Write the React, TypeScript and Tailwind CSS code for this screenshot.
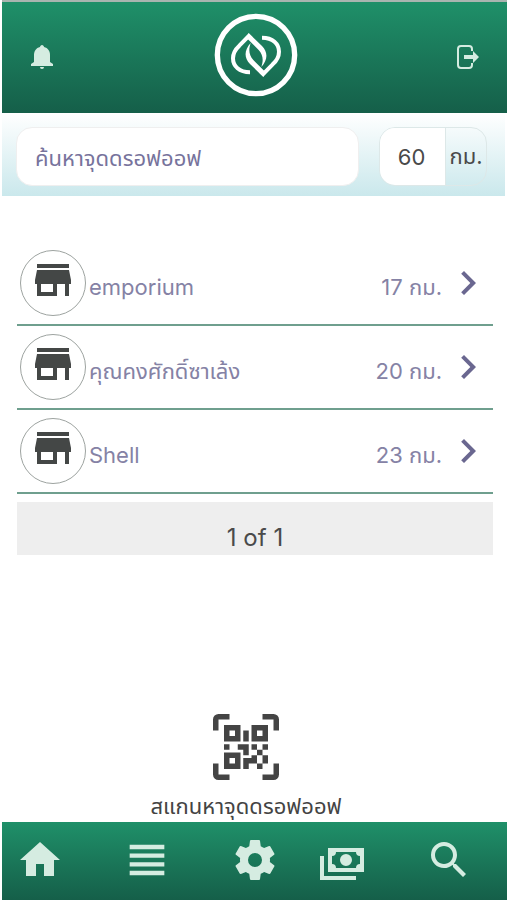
import type { ReactNode } from "react";

const dropOffs = [
	{ name: "emporium", distance: 17 },
	{ name: "คุณคงศักดิ์ซาเล้ง", distance: 20 },
	{ name: "Shell", distance: 23 },
];

const icons = {
	store: "M12,18H6V14H12M21,14V12L20,7H4L3,12V14H4V20H14V14H18V20H20V14M20,4H4V6H20V4Z",
	chevron: "M8.59,16.58L13.17,12L8.59,7.41L10,6L16,12L10,18L8.59,16.58Z",
	qrScan: "M4,4H10V10H4V4M20,4V10H14V4H20M14,15H16V13H14V11H16V13H18V11H20V13H18V15H20V18H18V20H16V18H13V20H11V16H14V15M16,15V18H18V15H16M4,20V14H10V20H4M6,6V8H8V6H6M16,6V8H18V6H16M6,16V18H8V16H6M4,11H6V13H4V11M9,11H13V15H11V13H9V11M11,6H13V10H11V6M2,2V6H0V2A2,2 0 0,1 2,0H6V2H2M22,0A2,2 0 0,1 24,2V6H22V2H18V0H22M2,18V22H6V24H2A2,2 0 0,1 0,22V18H2M22,22V18H24V22A2,2 0 0,1 22,24H18V22H22Z",
	home: "M10,20V14H14V20H19V12H22L12,3L2,12H5V20H10Z",
	list: "M4,5V7H20V5H4M4,9V11H20V9H4M4,13V15H20V13H4M4,17V19H20V17H4Z",
	settings: "M12,15.5A3.5,3.5 0 0,1 8.5,12A3.5,3.5 0 0,1 12,8.5A3.5,3.5 0 0,1 15.5,12A3.5,3.5 0 0,1 12,15.5M19.43,12.97C19.47,12.65 19.5,12.33 19.5,12C19.5,11.67 19.47,11.34 19.43,11L21.54,9.37C21.73,9.22 21.78,8.95 21.66,8.73L19.66,5.27C19.54,5.05 19.27,4.96 19.05,5.05L16.56,6.05C16.04,5.66 15.5,5.32 14.87,5.07L14.5,2.42C14.46,2.18 14.25,2 14,2H10C9.75,2 9.54,2.18 9.5,2.42L9.13,5.07C8.5,5.32 7.96,5.66 7.44,6.05L4.95,5.05C4.73,4.96 4.46,5.05 4.34,5.27L2.34,8.73C2.21,8.95 2.27,9.22 2.46,9.37L4.57,11C4.53,11.34 4.5,11.67 4.5,12C4.5,12.33 4.53,12.65 4.57,12.97L2.46,14.63C2.27,14.78 2.21,15.05 2.34,15.27L4.34,18.73C4.46,18.95 4.73,19.03 4.95,18.95L7.44,17.94C7.96,18.34 8.5,18.68 9.13,18.93L9.5,21.58C9.54,21.82 9.75,22 10,22H14C14.25,22 14.46,21.82 14.5,21.58L14.87,18.93C15.5,18.67 16.04,18.34 16.56,17.94L19.05,18.95C19.27,19.03 19.54,18.95 19.66,18.73L21.66,15.27C21.78,15.05 21.73,14.78 21.54,14.63L19.43,12.97Z",
	cash: "M5,6H23V18H5V6M14,9A3,3 0 0,1 17,12A3,3 0 0,1 14,15A3,3 0 0,1 11,12A3,3 0 0,1 14,9M9,8A2,2 0 0,1 7,10V14A2,2 0 0,1 9,16H19A2,2 0 0,1 21,14V10A2,2 0 0,1 19,8H9M1,10H3V20H19V22H1V10Z",
	search: "M9.5,3A6.5,6.5 0 0,1 16,9.5C16,11.11 15.41,12.59 14.44,13.73L14.71,14H15.5L20.5,19L19,20.5L14,15.5V14.71L13.73,14.44C12.59,15.41 11.11,16 9.5,16A6.5,6.5 0 0,1 3,9.5A6.5,6.5 0 0,1 9.5,3M9.5,5C7,5 5,7 5,9.5C5,12 7,14 9.5,14C12,14 14,12 14,9.5C14,7 12,5 9.5,5Z",
};

function Icon({ path, className }: { path: string; className: string }) {
	return (
		<svg viewBox="0 0 24 24" fill="currentColor" className={className} aria-hidden="true">
			<path d={path} />
		</svg>
	);
}

function Leaf() {
	return (
		<>
			<path d="M108,178C76,178 57,160 57,136C57,120 64,109 76,98L104,69L112,77" strokeWidth="12" />
			<path d="M104,60L144,99C162,117 162,140 142,162C149,140 147,126 134,111L98,75Z" fill="white" stroke="none" />
		</>
	);
}

function Logo() {
	return (
		<svg viewBox="0 0 252 252" fill="none" stroke="white" className="size-21" role="img" aria-label="Logo">
			<circle cx="126" cy="126" r="116" strokeWidth="16" />
			<Leaf />
			<g transform="rotate(180 126 126)">
				<Leaf />
			</g>
		</svg>
	);
}

function NavItem({ label, className, children }: { label: string; className?: string; children: ReactNode }) {
	return (
		<li className={className}>
			<button type="button" aria-label={label} className="flex size-12 items-center justify-center">
				{children}
			</button>
		</li>
	);
}

export default function App() {
	return (
		<div className="flex min-h-dvh flex-col bg-white pl-0.5 font-['Inter','Noto_Sans_Thai','Noto_Sans',sans-serif] text-[#4a4a4a]">
			<header className="flex items-center justify-between border-t-2 border-[#a9b5b0] bg-linear-to-b from-[#1f9069] to-[#155f49] pt-[11px] pr-6 pb-4 pl-6.5 text-[#d5ece1]">
				<button type="button" aria-label="Notifications" className="pt-1">
					<svg viewBox="0 0 28 28" fill="currentColor" className="size-7" aria-hidden="true">
						<path d="M14,2C15,2 16,3 16,4C20,5 22,8 22,12V19L25,21V23H3V21L6,19V12C6,8 8,5 12,4C12,3 13,2 14,2ZM12,24H16A2,2 0 0 1 12,24Z" />
					</svg>
				</button>
				<Logo />
				<button type="button" aria-label="Log out" className="pt-1">
					<svg viewBox="0 0 28 28" fill="none" stroke="currentColor" className="size-7" aria-hidden="true">
						<path d="M17,8V6Q17,3 14,3H6Q3,3 3,6V22Q3,25 6,25H14Q17,25 17,22V20" strokeWidth="2" />
						<path d="M9,12H18V8L24,14L18,20V16H9Z" fill="currentColor" stroke="none" />
					</svg>
				</button>
			</header>

			<form className="mr-0.5 flex gap-5 bg-linear-to-b from-white to-[#cae8ec] pt-3.5 pr-4.5 pb-2.5 pl-3.5 text-[22px]">
				<input
					type="text"
					aria-label="ค้นหาจุดดรอฟออฟ"
					placeholder="ค้นหาจุดดรอฟออฟ"
					className="h-[59px] min-w-0 flex-1 rounded-2xl border border-[#efefef] bg-white px-4.5 pt-0.5 placeholder:text-[#77739c]"
				/>
				<div className="flex h-[59px] w-27 overflow-hidden rounded-2xl border border-[#dde8e8]">
					<input
						id="radius"
						type="text"
						inputMode="numeric"
						defaultValue="60"
						className="min-w-0 flex-1 bg-white pt-0.5 pr-0.5 text-center"
					/>
					<label htmlFor="radius" className="flex w-[41px] items-center justify-center border-l border-[#dde8e8]">
						กม.
					</label>
				</div>
			</form>

			<main className="flex flex-1 flex-col pt-11.5 pr-3.5 pl-[15px]">
				<ul>
					{dropOffs.map((item) => (
						<li key={item.name} className="border-b-2 border-[#6f9f8e]">
							<a href="#" className="flex items-center py-2 pr-px pl-[3px] text-[22px] text-[#8582a5]">
								<span className="flex size-[66px] shrink-0 items-center justify-center rounded-full border border-[#9da3a0] pb-1.5 text-[#444746]">
									<Icon path={icons.store} className="size-12" />
								</span>
								<span className="flex-1 pt-2 pl-[3px]">{item.name}</span>
								<span className="pt-2">{item.distance} กม.</span>
								<Icon path={icons.chevron} className="ml-0.5 size-12 text-[#6a6790]" />
							</a>
						</li>
					))}
				</ul>

				<p className="mt-2 bg-[#eeeeee] pt-5 pb-px text-center text-2xl">1 of 1</p>

				<button type="button" className="mt-auto mr-[18px] flex flex-col items-center text-[22px] text-[#444444]">
					<Icon path={icons.qrScan} className="mb-2.5 size-[66px]" />
					<span className="leading-8">สแกนหาจุดดรอฟออฟ</span>
				</button>
			</main>

			<nav className="bg-linear-to-b from-[#1f9069] to-[#155f49] pt-3.5 pr-8.5 pb-4 pl-3.5 text-[#d5ece1]">
				<ul className="flex justify-between">
					<NavItem label="Home">
						<Icon path={icons.home} className="size-12" />
					</NavItem>
					<NavItem label="List">
						<Icon path={icons.list} className="size-13 shrink-0" />
					</NavItem>
					<NavItem label="Settings">
						<Icon path={icons.settings} className="size-12" />
					</NavItem>
					<NavItem label="Payments" className="-ml-5">
						<Icon path={icons.cash} className="size-12" />
					</NavItem>
					<NavItem label="Search">
						<Icon path={icons.search} className="size-12" />
					</NavItem>
				</ul>
			</nav>
		</div>
	);
}
